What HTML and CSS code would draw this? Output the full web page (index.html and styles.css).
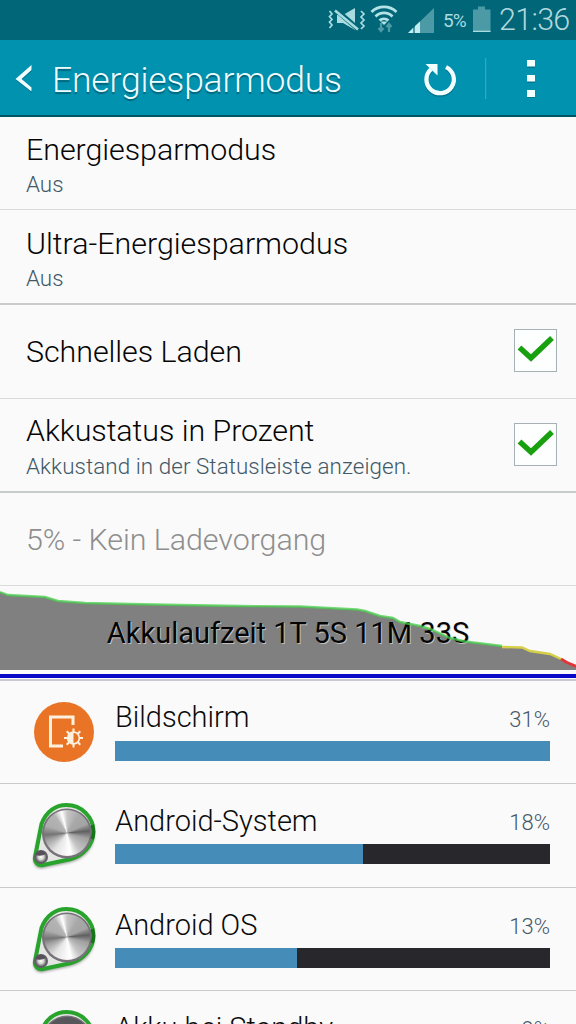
FILE: index.html
```html
<!DOCTYPE html>
<html lang="de">
<head>
<meta charset="utf-8">
<title>Energiesparmodus</title>
<link rel="stylesheet" href="styles.css">
</head>
<body>
<div class="screen">
  <header class="status">
    <svg class="status-icons" width="115" height="40" viewBox="0 0 115 40">
      <g fill="none" stroke="#a9dce1" stroke-width="1.700">
        <path d="M1.500 11l2.500 3-2.500 2.500 2.500 3-2.500 2.500 2.500 3-2.500 3"/>
        <path d="M33 11l3 3-3 3 3 3-3 3 3 3-3 3"/>
      </g>
      <path d="M9 15h6L27 8v22l-12-7H9z" fill="#a9dce1"/>
      <path d="M7 9l23 20" stroke="#006678" stroke-width="5"/>
      <path d="M7 10.500l23 19" stroke="#a9dce1" stroke-width="2.600"/>
      <g fill="none" stroke="#b4e3e7" stroke-width="2.800">
        <path d="M43.500 12a18 18 0 0 1 25 0M47.500 16.500a12 12 0 0 1 17 0M51.500 20.500a7 7 0 0 1 9 0"/>
      </g>
      <path d="M52.500 21.500h7L56 25z" fill="#b4e3e7"/>
      <path d="M53 23v8M50.500 28l2.500 3 2.500-3M61 32v-7M58.500 27l2.500-3 2.500 3" fill="none" stroke="#4b9aa5" stroke-width="2.200"/>
      <path d="M80 33L106 8v25z" fill="#4b9aa5"/>
      <path d="M80 33l5-5v5zM87 33v-7l5-4.500V33z" fill="#c2edf0"/>
    </svg>
    <span class="percent">5%</span>
    <svg class="battery" width="18" height="40" viewBox="0 0 18 40">
      <path d="M0 9.500h5V6.500h7v3h5.500V32H0z" fill="#4b9aa5"/>
      <path d="M0 30.700h17.500V32H0z" fill="#a9dce1"/>
    </svg>
    <span class="clock">21:36</span>
  </header>

  <nav class="appbar">
    <svg class="back" width="18" height="32" viewBox="0 0 18 32">
      <path d="M17 4v4L6 17.500 17 26v4L1 17.500z" fill="#00586a" opacity=".5"/>
      <path d="M16.500 2v5L6.500 16l10 8.500v4L.5 16z" fill="#f2ffff"/>
    </svg>
    <h1 class="title">Energiesparmodus</h1>
    <svg class="tools" width="122" height="50" viewBox="0 0 122 50">
      <g transform="translate(-1.500 .5)">
        <path d="M27.500 14.100a13.700 13.700 0 1 1-14.800 2" fill="none" stroke="#00586a" stroke-width="4.300" opacity=".5"/>
        <path d="M27.500 12.600a13.700 13.700 0 1 1-14.800 2" fill="none" stroke="#f2ffff" stroke-width="4.300"/>
        <path d="M7 9.500H19V21z" fill="#f2ffff"/>
      </g>
      <path d="M65.700 4v41" stroke="#42aec2" stroke-width="1"/>
      <path d="M107 7h8v7h-8zM107 22h8v7h-8zM107 37h8v7h-8z" fill="#00586a" opacity=".5"/>
      <path d="M107 6h8v6.500h-8zM107 21h8v6.500h-8zM107 36h8v7h-8z" fill="#f4ffff"/>
    </svg>
  </nav>

  <main>
    <section class="row row-1">
      <div><h2 class="name">Energiesparmodus</h2><p class="note">Aus</p></div>
    </section>
    <section class="row row-2">
      <div><h2 class="name n2">Ultra-Energiesparmodus</h2><p class="note">Aus</p></div>
    </section>
    <section class="row row-3">
      <h2 class="name">Schnelles Laden</h2>
      <span class="check"><svg width="41" height="41" viewBox="0 0 41 41"><path d="M4.500 17.500l11.500 10.500L37 8" fill="none" stroke="#19a00f" stroke-width="5.500"/></svg></span>
    </section>
    <section class="row row-4">
      <div><h2 class="name">Akkustatus in Prozent</h2><p class="note n-long">Akkustand in der Statusleiste anzeigen.</p></div>
      <span class="check"><svg width="41" height="41" viewBox="0 0 41 41"><path d="M4.500 17.500l11.500 10.500L37 8" fill="none" stroke="#19a00f" stroke-width="5.500"/></svg></span>
    </section>
    <section class="row row-5">
      <h2 class="name n5">5% - Kein Ladevorgang</h2>
    </section>

    <section class="chart">
      <svg class="curve" width="576" height="95" viewBox="0 586 576 95">
        <path d="M0 592L8 595 45 597 58 601 85 603 130 604 180 605 240 606 300 606.500 357 609.500 365 611 380 616 393 618 400 622 420 626 430 629 450 638 465 641.500 502 646 522 647.500 530 651 550 654 561 659 576 666V670H0z" fill="#808080"/>
        <path d="M502 647L522 647.500 530 651 550 654 561 659" fill="none" stroke="#d6cf49" stroke-width="2.400"/>
        <path d="M561 659L567 662.500 576 666.500" fill="none" stroke="#e23535" stroke-width="3"/>
        <path d="M0 674h576v4H0z" fill="#0808c8"/>
        <path d="M0 679h576v2H0z" fill="#c9c9d6"/>
      </svg>
      <span class="runtime">Akkulaufzeit 1T 5S 11M 33S</span>
      <svg class="curve" width="576" height="95" viewBox="0 586 576 95">
        <path d="M0 592L8 595 45 597 58 601 85 603 130 604 180 605 240 606 300 606.500 357 609.500 365 611 380 616 393 618 400 622 420 626 430 629 450 638 465 641.500 502 646" fill="none" stroke="#47cf4b" stroke-width="2.400"/>
      </svg>
    </section>

    <section class="app app-1">
      <svg class="icon" width="72" height="72" viewBox="0 0 72 72">
        <circle cx="36" cy="36" r="30" fill="#e97426"/>
        <path d="M45 29v-8H22.500v29H35" fill="none" stroke="#fff1df" stroke-width="3"/>
        <path d="M45.500 32.500v19M36 42h19M38.700 35.200l13.600 13.600M52.300 35.200L38.700 48.800" stroke="#fff1df" stroke-width="2"/>
        <circle cx="45.500" cy="42" r="6.700" fill="#fff1df"/>
        <path d="M45.500 37a5 5 0 0 1 0 10z" fill="#e97426"/>
      </svg>
      <div class="usage">
        <div class="label"><h3>Bildschirm</h3><span>31%</span></div>
        <div class="bar"><i style="width:100%"></i></div>
      </div>
    </section>
    <section class="app app-2">
      <span class="icon dial"><svg width="72" height="72" viewBox="0 0 72 72"><use href="#belt"/></svg></span>
      <div class="usage">
        <div class="label"><h3>Android-System</h3><span>18%</span></div>
        <div class="bar"><i style="width:57%"></i></div>
      </div>
    </section>
    <section class="app app-3">
      <span class="icon dial"><svg width="72" height="72" viewBox="0 0 72 72"><use href="#belt"/></svg></span>
      <div class="usage">
        <div class="label"><h3>Android OS</h3><span>13%</span></div>
        <div class="bar"><i style="width:41.900%"></i></div>
      </div>
    </section>
    <section class="app app-4">
      <span class="icon"><svg width="72" height="72" viewBox="0 0 72 72"><use href="#belt"/><circle cx="39" cy="35" r="24" fill="#57565b"/></svg></span>
      <div class="usage">
        <div class="label"><h3>Akku bei Standby</h3><span>9%</span></div>
        <div class="bar"><i style="width:29%"></i></div>
      </div>
    </section>
  </main>
</div>

<svg class="defs" width="0" height="0">
  <defs>
    <filter id="soft" x="-20%" y="-20%" width="140%" height="140%"><feGaussianBlur stdDeviation="1.600"/></filter>
    <radialGradient id="knob"><stop offset="0" stop-color="#fff"/><stop offset=".5" stop-color="#d2d2d2"/><stop offset="1" stop-color="#5b5b5b"/></radialGradient>
    <g id="belt">
      <path d="M12.500 25C17 12 27 5 38.500 5 54 5 66 17 66 33S54 58 43 61L15 67C9 68 5 64 6 58z" fill="#777" opacity=".8" filter="url(#soft)" transform="translate(0 2)"/>
      <path d="M13.500 25C18 12.500 27.500 6 38.500 6 53.500 6 65.500 18 65.500 32.500S53.500 57.500 43 60L15 66C10 67 6 63 7 58z" fill="#e3e6e3" stroke="#28a32b" stroke-width="4"/>
      <circle cx="39" cy="34.500" r="25" fill="#77717a"/>
      <circle cx="13" cy="58" r="7" fill="#625f66"/>
      <circle cx="13" cy="58" r="5.500" fill="url(#knob)"/>
      <path d="M7.500 56q5 2 10-1v-1q-5-5-9 0z" fill="#55505a"/>
      <path d="M64 26c2 5 2 10 0 14" stroke="#0c5511" stroke-width="3.500" fill="none" opacity=".6"/>
    </g>
  </defs>
</svg>
</body>
</html>
```

FILE: styles.css
```css
* { box-sizing: border-box; margin: 0; padding: 0; }

body {
  background: #fafafa;
  font-family: Roboto, "Noto Sans", sans-serif;
  font-weight: 300;
  overflow: hidden;
}

h1, h2, h3 { font-weight: 300; white-space: nowrap; }
svg { display: block; }
.defs { position: absolute; }

.screen { width: 576px; height: 1024px; overflow: hidden; background: #fafafa; }

.status {
  display: flex;
  height: 40px;
  padding-left: 328px;
  background: #006678;
  color: #a9dce1;
  white-space: nowrap;
}
.percent { width: 30px; line-height: 41px; font-size: 19px; font-weight: 400; letter-spacing: -0.9px; }
.battery { margin-right: 8px; }
.clock { line-height: 40px; font-size: 30.5px; letter-spacing: -0.7px; color: #b0d8dd; }

.appbar {
  display: flex;
  align-items: center;
  height: 77px;
  padding: 2px 34px 0 15px;
  background: #0092af;
  border-bottom: 2px solid #005565;
}
.title {
  flex: 1;
  margin-left: 19px;
  padding-top: 2px;
  line-height: 42px;
  font-size: 35.5px;
  letter-spacing: -0.2px;
  color: #effcff;
  text-shadow: 0 2px 1px rgba(0, 65, 80, 0.55);
}

.row {
  display: flex;
  justify-content: space-between;
  padding: 15px 18px 0 26px;
  border-bottom: 1px solid #d9dbdb;
}
.row-1 { height: 93px; }
.row-2 { height: 95px; padding-top: 16px; border-bottom: 2px solid #cbcbcb; }
.row-3 { height: 94px; }
.row-4 { height: 94px; padding-top: 14px; border-bottom: 2px solid #c8cbcb; }
.row-5 { height: 93px; }
.row-3 { align-items: center; padding-top: 0; }
.row-5 { align-items: center; padding-top: 2px; }
.name { line-height: 36px; font-size: 30.4px; letter-spacing: -0.05px; color: #050505; }
.n2 { letter-spacing: 0; }
.n5 { color: #8e8e8e; }
.note { margin-top: 2px; line-height: 28px; font-size: 22.4px; color: #415867; white-space: nowrap; }
.n-long { margin-top: 3px; letter-spacing: 0.07px; }
.check { width: 43px; height: 43px; border: 1px solid #a5b1b3; background: #fdfffe; }
.row-3, .row-4 { padding-right: 19px; }
.row-3 .check { margin: -2px 0 0; }
.row-4 .check { margin-top: 10px; }

.chart { position: relative; display: flex; justify-content: center; height: 95px; }
.curve { position: absolute; top: 0; left: 0; }
.runtime {
  position: relative;
  margin-top: 29px;
  line-height: 36px;
  font-size: 29px;
  font-weight: 400;
  color: #050505;
  white-space: nowrap;
  text-shadow: 1px 1px 0 rgba(210, 210, 210, 0.8);
}
.curve:first-child { z-index: 0; }
.runtime + .curve { z-index: 0; opacity: 0.75; }

.app {
  display: flex;
  padding: 0 26px 0 28px;
  border-bottom: 1px solid #c9cbcb;
}
.app-1 { height: 103px; }
.app-2 { height: 104px; }
.app-3 { height: 103px; }
.app-4 { height: 103px; }
.icon { width: 72px; height: 72px; margin: 15px 15px 0 0; }
.dial { position: relative; }
.dial::after {
  content: "";
  position: absolute;
  left: 16px;
  top: 11px;
  width: 46px;
  height: 46px;
  border-radius: 50%;
  background: conic-gradient(#c6c6c6 0deg, #a8a8a8 35deg, #a4a4a4 65deg, #606060 85deg, #a0a0a0 105deg, #c7c7c7 145deg, #fff 170deg, #e4e4e4 215deg, #a0a0a0 250deg, #747474 265deg, #adadad 290deg, #b4b4b4 325deg, #fff 345deg, #c6c6c6 360deg);
}
.usage { flex: 1; padding-top: 18px; }
.label { display: flex; justify-content: space-between; height: 42px; }
.app-2 .label, .app-3 .label, .app-4 .label { padding-top: 0.6px; }
.label h3 { line-height: 36px; font-size: 29px; color: #0b0b0b; }
.label span { padding-top: 2px; line-height: 36px; font-size: 22px; color: #455867; }
.app-1 .label span { padding-top: 3px; }
.bar { height: 20px; background: #28272c; }
.bar i { display: block; height: 100%; background: #468cb8; }
```
